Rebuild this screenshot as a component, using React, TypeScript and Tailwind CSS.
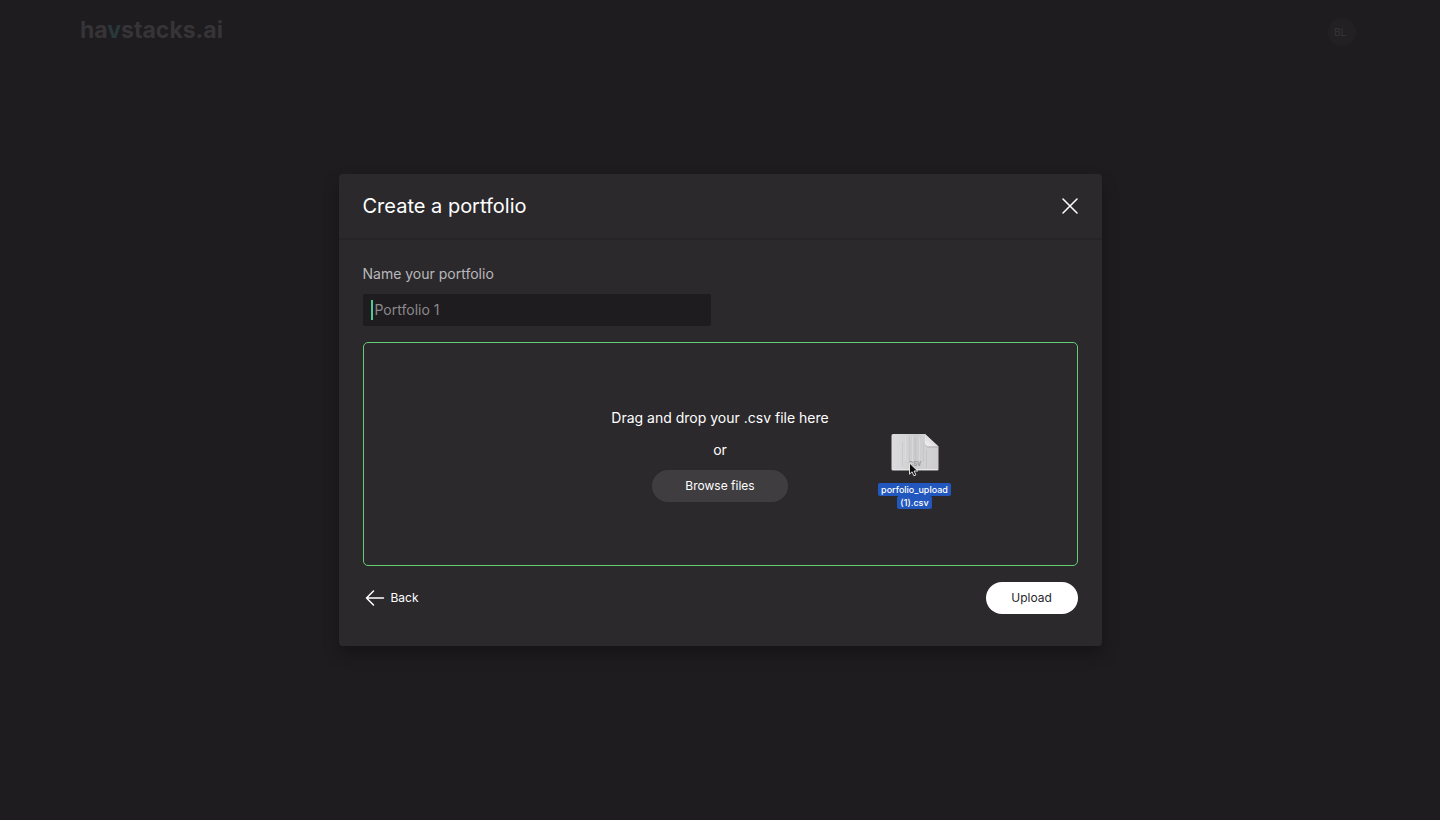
function CloseIcon() {
  return (
    <svg className="size-4" viewBox="0 0 16 16" fill="none" stroke="currentColor" strokeWidth="1.5" strokeLinecap="round" aria-hidden="true">
      <path d="M1 1 15 15M15 1 1 15" />
    </svg>
  );
}

function BackIcon() {
  return (
    <svg className="h-4 w-5" viewBox="0 0 20 16" fill="none" stroke="currentColor" strokeWidth="1.5" strokeLinecap="round" strokeLinejoin="round" aria-hidden="true">
      <path d="M18.5 8H1.5M8.5 1 1.5 8l7 7" />
    </svg>
  );
}

function FileIcon() {
  return (
    <svg className="h-10 w-12" viewBox="0 0 48 40" aria-hidden="true">
      <defs>
        <linearGradient id="sheet" x1="0" x2="1" y1="0" y2="0">
          <stop offset="0" stopColor="#dcdbdd" />
          <stop offset="0.25" stopColor="#d6d5d7" />
          <stop offset="0.5" stopColor="#cac9cb" />
          <stop offset="0.75" stopColor="#d2d1d3" />
          <stop offset="1" stopColor="#cdccce" />
        </linearGradient>
        <linearGradient id="fold" x1="0" x2="1" y1="1" y2="0">
          <stop offset="0" stopColor="#f3f2f4" />
          <stop offset="1" stopColor="#c4c3c5" />
        </linearGradient>
      </defs>
      <path d="M2 2h32l13.500 12.500V37.500a1 1 0 0 1-1 1H2a1.500 1.500 0 0 1-1.500-1.500V3.500A1.500 1.500 0 0 1 2 2Z" fill="url(#sheet)" />
      <g strokeWidth="1" opacity="0.5">
        <path d="M14.500 4v24M21.500 4v26M28.500 5v24" stroke="#e3e2e4" />
        <path d="M11.500 10v24M18.500 5v27M24.500 6v23M32.500 10v20" stroke="#bdbcbe" />
        <path d="M35.500 18v18" stroke="#b5b4b6" />
      </g>
      <path d="M2 37.500h44.500" stroke="#e6e5e7" />
      <path d="M34 2 47.500 14.500H36.500A2.500 2.500 0 0 1 34 12Z" fill="url(#fold)" />
      <path d="M34.500 12.500c.5 1.500 1 2.500 3 2.500h10" fill="none" stroke="#9d9c9e" strokeWidth="0.7" />
      <text x="24" y="34" textAnchor="middle" fontSize="6" fontWeight="500" fill="#8b8a8c" fontFamily="Inter, sans-serif">CSV</text>
    </svg>
  );
}

function Pointer() {
  return (
    <svg className="absolute top-[30px] left-[31px] h-4 w-3" viewBox="0 0 12 16" aria-hidden="true">
      <path d="M1.500 1v11.200l2.600-2.400 1.800 4 2-.9-1.800-3.900h3.600Z" fill="#0b0b0c" stroke="#f4f4f4" strokeWidth="0.9" strokeLinejoin="round" />
    </svg>
  );
}

function DraggedFile() {
  return (
    <div className="pointer-events-none absolute top-[89px] left-[513px] flex w-[76px] flex-col items-center text-center">
      <FileIcon />
      <p className="mt-[11px] text-[9px] leading-[13px] font-medium whitespace-nowrap text-white">
        <span className="rounded-xs bg-[#2257bd] box-decoration-clone px-[3px] py-px">
          porfolio_upload
          <br />
          (1).csv
        </span>
      </p>
      <Pointer />
    </div>
  );
}

export default function App() {
  return (
    <div className="relative flex min-h-screen items-center justify-center bg-[#1e1c1f] font-['Inter','Liberation_Sans',sans-serif] text-white">
      <header className="absolute inset-x-0 top-0 flex h-16 items-center justify-between px-20">
        <a href="#" className="pb-1 text-[23px] leading-7 font-bold text-[#363437]">
          ha<span className="text-[#29383a]">v</span>stacks.ai
        </a>
        <button type="button" aria-label="Account" className="mr-1 flex size-7 items-center justify-center rounded-full bg-[#222023] pr-1 text-[10px] font-medium text-[#343235]">
          BL
        </button>
      </header>

      <section role="dialog" aria-labelledby="dialog-title" className="relative w-full max-w-[763px] rounded-sm bg-[#2b292c] shadow-[0_8px_16px_rgba(0,0,0,0.3)]">
        <div className="flex h-16 items-center justify-between px-6">
          <h1 id="dialog-title" className="text-xl font-normal">Create a portfolio</h1>
          <button type="button" aria-label="Close">
            <CloseIcon />
          </button>
        </div>

        <form className="border-t-2 border-[#262427] px-6 pt-[22px] pb-8" onSubmit={(event) => event.preventDefault()}>
          <label htmlFor="portfolio-name" className="block text-sm leading-6 text-[#b9b8ba]">Name your portfolio</label>
          <div className="relative mt-2 w-[348px] max-w-full">
            <input
              id="portfolio-name"
              type="text"
              placeholder="Portfolio 1"
              className="block h-8 w-full rounded-xs bg-[#1e1c1f] px-3 pb-0.5 text-sm text-white caret-[#4fd18b] outline-none placeholder:text-[#8b898c]"
            />
            <span className="absolute top-1.5 left-2 h-5 w-0.5 bg-[#52c893]" aria-hidden="true" />
          </div>

          <div className="relative mt-4 flex h-56 flex-col items-center justify-center rounded-[5px] border border-[#62cf77] text-sm">
            <p className="leading-6">Drag and drop your .csv file here</p>
            <p className="mt-2 leading-6">or</p>
            <button type="button" className="mt-2 h-8 w-[136px] rounded-full bg-[#3f3d40] text-xs">Browse files</button>
            <DraggedFile />
          </div>

          <div className="mt-4 flex h-8 items-center justify-between text-xs">
            <button type="button" className="flex h-8 items-center gap-1.5 pl-0.5">
              <BackIcon />
              Back
            </button>
            <button type="submit" className="h-8 w-[92px] rounded-full bg-white text-[#29272a]">Upload</button>
          </div>
        </form>
      </section>
    </div>
  );
}
